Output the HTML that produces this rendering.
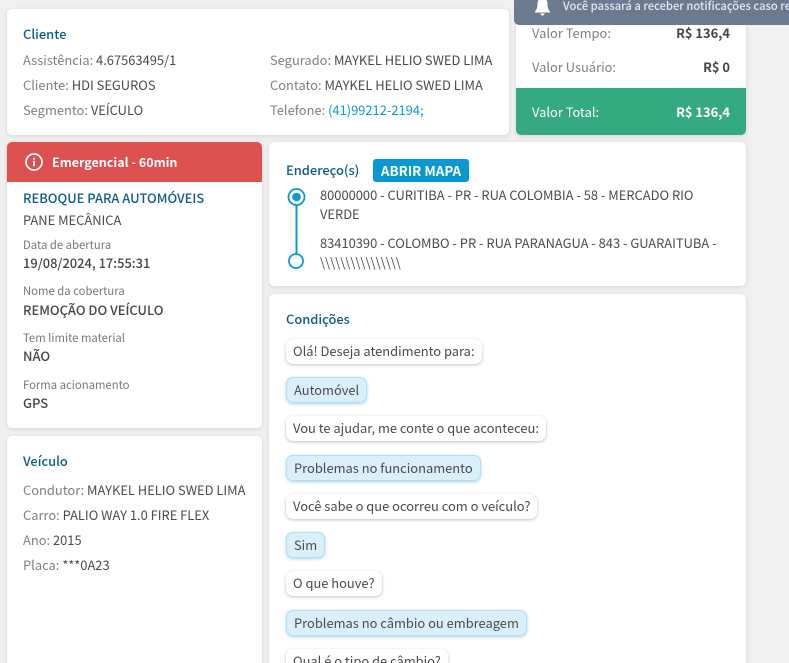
<!DOCTYPE html>
<html lang="pt-BR"><head><meta charset="utf-8"><title>Atendimento</title>
<style>
html,body{margin:0;padding:0;width:789px;height:663px;overflow:hidden}
#r{position:absolute;left:0;top:0;width:789px;height:663px;overflow:hidden;background:#f0f0f0;font-family:"Noto Sans CJK JP","Liberation Sans",sans-serif;font-size:12.9px;color:#4a4a4a}
.card{position:absolute;background:#fff;border-radius:5px;box-shadow:0 1px 4px rgba(0,0,0,.12);overflow:hidden}
.t{position:absolute;white-space:nowrap;line-height:20px;height:20px}
.g{color:#808080}
.h{color:#0e5a85;font-weight:500}
.s{font-size:11.3px;color:#777}
.b{font-weight:700;color:#444}
.m{font-weight:500;color:#444}
.msg{position:absolute;left:286px;height:25px;line-height:24px;box-sizing:border-box;padding:0 7px;background:#fff;border-radius:7px;box-shadow:0 1px 3px rgba(0,0,0,.25);white-space:nowrap;color:#4a4a4a}
.a{left:286px;height:26px;padding:0 8px;background:#d9eff9;box-shadow:inset 0 0 0 1px #b5dff0,0 1px 3px rgba(0,130,190,.35);line-height:26px}
</style></head><body><div id="r">

<div class="card" style="left:7px;top:9px;width:502px;height:126px"></div>
<div class="t h" style="left:23px;top:24px">Cliente</div>
<div class="t" style="left:23px;top:50px"><span class="g">Assistência:</span> 4.67563495/1</div>
<div class="t" style="left:23px;top:75px"><span class="g">Cliente:</span> HDI SEGUROS</div>
<div class="t" style="left:23px;top:100px"><span class="g">Segmento:</span> VEÍCULO</div>
<div class="t" style="left:270px;top:50px"><span class="g">Segurado:</span> MAYKEL HELIO SWED LIMA</div>
<div class="t" style="left:270px;top:75px"><span class="g">Contato:</span> MAYKEL HELIO SWED LIMA</div>
<div class="t" style="left:270px;top:100px"><span class="g">Telefone:</span> <span style="color:#0a9bd6">(41)99212-2194;</span></div>

<div class="card" style="left:516px;top:0;width:230px;height:135px">
  <div style="position:absolute;left:0;top:88px;width:230px;height:47px;background:#35aa80"></div>
</div>
<div class="t g" style="left:532px;top:23px">Valor Tempo:</div>
<div class="t b" style="right:59px;top:23px">R$ 136,4</div>
<div class="t g" style="left:532px;top:57px">Valor Usuário:</div>
<div class="t b" style="right:59px;top:57px">R$ 0</div>
<div class="t" style="left:532px;top:102px;color:#fff">Valor Total:</div>
<div class="t" style="right:59px;top:102px;color:#fff;font-weight:700">R$ 136,4</div>

<div style="position:absolute;left:514px;top:-10px;width:290px;height:35px;background:#6b7a8f;border-radius:5px"></div>
<svg style="position:absolute;left:533px;top:0" width="19" height="16" viewBox="0 0 19 16"><path d="M9.500 -2C6 -2 4.500 0.500 4.500 4C4.500 8 3.500 9.500 2 11.500V12.500H17V11.500C15.500 9.500 14.500 8 14.500 4C14.500 0.500 13 -2 9.500 -2Z" fill="#fff"/><path d="M7.500 13.500H11.500C11.300 15 10.500 15.500 9.500 15.500S7.700 15 7.500 13.500Z" fill="#fff"/></svg>
<div class="t" style="left:563px;top:-4px;color:#e6eaf0;font-size:11.2px;font-weight:500">Você passará a receber notificações caso re</div>

<div class="card" style="left:7px;top:142px;width:255px;height:286px">
  <div style="position:absolute;left:0;top:0;width:255px;height:40px;background:#dc5050"></div>
</div>
<svg style="position:absolute;left:24px;top:152px" width="20" height="20" viewBox="0 0 20 20"><circle cx="10" cy="10" r="8" fill="none" stroke="#fff" stroke-width="1.700"/><rect x="9.100" y="8.800" width="1.800" height="5.400" fill="#fff"/><rect x="9.100" y="5.800" width="1.800" height="1.900" fill="#fff"/></svg>
<div class="t" style="left:52px;top:152px;color:#fff;font-weight:700;font-size:12.5px">Emergencial - 60min</div>
<div class="t h" style="left:23px;top:188px">REBOQUE PARA AUTOMÓVEIS</div>
<div class="t" style="left:23px;top:210px">PANE MECÂNICA</div>
<div class="t s" style="left:23px;top:235px">Data de abertura</div>
<div class="t m" style="left:23px;top:253px">19/08/2024, 17:55:31</div>
<div class="t s" style="left:23px;top:281px">Nome da cobertura</div>
<div class="t m" style="left:23px;top:300px">REMOÇÃO DO VEÍCULO</div>
<div class="t s" style="left:23px;top:328px">Tem limite material</div>
<div class="t m" style="left:23px;top:346px">NÃO</div>
<div class="t s" style="left:23px;top:375px">Forma acionamento</div>
<div class="t m" style="left:23px;top:393px">GPS</div>

<div class="card" style="left:7px;top:436px;width:255px;height:240px"></div>
<div class="t h" style="left:23px;top:451px">Veículo</div>
<div class="t" style="left:23px;top:480px"><span class="g">Condutor:</span> MAYKEL HELIO SWED LIMA</div>
<div class="t" style="left:23px;top:505px"><span class="g">Carro:</span> PALIO WAY 1.0 FIRE FLEX</div>
<div class="t" style="left:23px;top:530px"><span class="g">Ano:</span> 2015</div>
<div class="t" style="left:23px;top:555px"><span class="g">Placa:</span> ***0A23</div>

<div class="card" style="left:269px;top:142px;width:477px;height:144px"></div>
<div class="t h" style="left:286px;top:160px;font-size:12.9px">Endereço(s)</div>
<div style="position:absolute;left:373px;top:159px;width:96px;height:23px;background:#0a98d3;border-radius:3px;color:#fff;font-weight:700;font-size:13.4px;text-align:center;line-height:22px">ABRIR MAPA</div>
<svg style="position:absolute;left:285px;top:185px" width="24" height="86" viewBox="0 0 24 86"><line x1="11.500" y1="20" x2="11.500" y2="70" stroke="#0a98d3" stroke-width="2"/><circle cx="11.500" cy="12" r="8" fill="#fff" stroke="#0a98d3" stroke-width="1.800"/><circle cx="11.500" cy="12" r="4.300" fill="#0a98d3"/><circle cx="11" cy="76" r="7" fill="#fff" stroke="#0a98d3" stroke-width="1.800"/></svg>
<div class="t" style="left:320px;top:185px">80000000 - CURITIBA - PR - RUA COLOMBIA - 58 - MERCADO RIO</div>
<div class="t" style="left:320px;top:204px">VERDE</div>
<div class="t" style="left:320px;top:233px">83410390 - COLOMBO - PR - RUA PARANAGUA - 843 - GUARAITUBA -</div>
<div class="t" style="left:320px;top:252px">\\\\\\\\\\\\\\\\</div>

<div class="card" style="left:269px;top:294px;width:477px;height:380px"></div>
<div class="t h" style="left:286px;top:309px;font-size:12.9px">Condições</div>
<div class="msg" style="top:339px">Olá! Deseja atendimento para:</div>
<div class="msg a" style="top:377px">Automóvel</div>
<div class="msg" style="top:416px">Vou te ajudar, me conte o que aconteceu:</div>
<div class="msg a" style="top:455px">Problemas no funcionamento</div>
<div class="msg" style="top:494px">Você sabe o que ocorreu com o veículo?</div>
<div class="msg a" style="top:532px">Sim</div>
<div class="msg" style="top:571px">O que houve?</div>
<div class="msg a" style="top:610px">Problemas no câmbio ou embreagem</div>
<div class="msg" style="top:649px">Qual é o tipo de câmbio?</div>

</div></body></html>
